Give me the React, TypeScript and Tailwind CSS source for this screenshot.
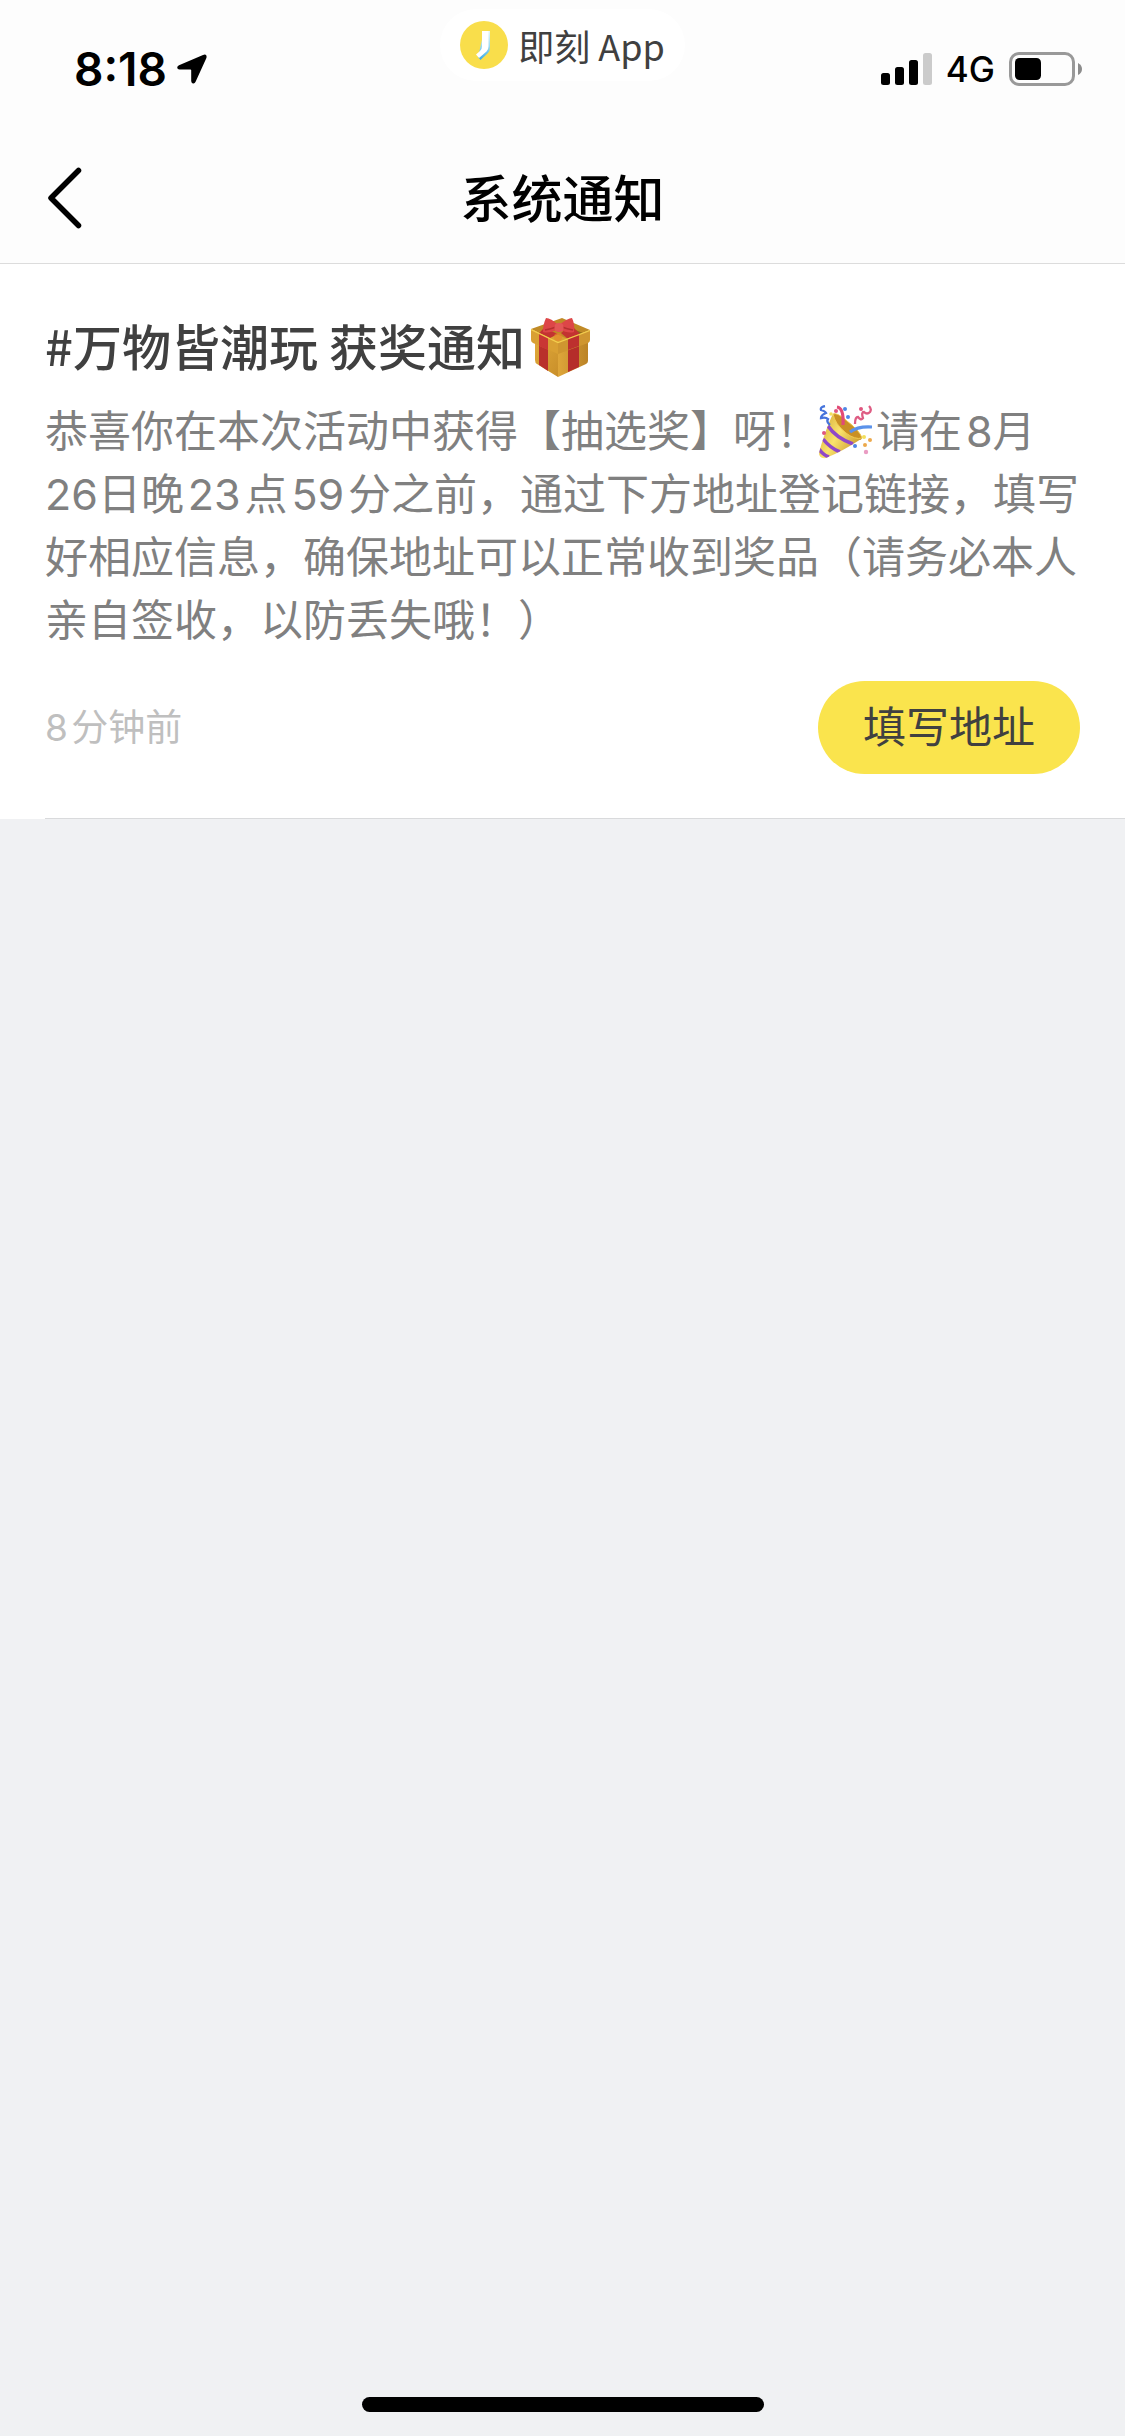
import React from 'react';

const StatusBar: React.FC = () => (
  <div className="grid h-[132px] grid-cols-3 items-center pt-1.5 font-['Inter','Noto_Sans_CJK_SC',sans-serif] text-black">
    <div className="flex items-center gap-2.5 pl-[74px]">
      <span className="text-[46px] font-semibold leading-none">8:18</span>
      <svg className="h-[30px] w-[30px]" viewBox="0 0 30 30" aria-hidden="true">
        <path
          d="M2 11.2 26 .9Q30.4-.5 29.4 4L18.6 27.8Q17.6 30 15.8 29.4Q14.2 29 14.2 27V16.2Q14.2 15.6 13.4 15.6H2.5Q.3 15.3.2 13.4Q.3 12 2 11.2Z"
          fill="currentColor"
        />
      </svg>
    </div>

    <div className="mt-[3px] flex h-[72px] items-center gap-2.5 self-start justify-self-center rounded-full bg-white px-5 font-['Noto_Sans_CJK_SC',sans-serif] text-[36px] leading-none text-[#404040]">
      <svg className="h-12 w-12" viewBox="0 0 48 48" aria-hidden="true">
        <defs>
          <linearGradient id="jike" x1="0" y1="0" x2="0" y2="1">
            <stop offset="0" stopColor="#e8f6f4" />
            <stop offset="0.5" stopColor="#9fdcf0" />
            <stop offset="1" stopColor="#3aa9e8" />
          </linearGradient>
        </defs>
        <circle cx="24" cy="24" r="24" fill="#f9de4b" />
        <path d="M24 10H30V26Q30 30 28 32L20.5 39L18 36Z" fill="url(#jike)" />
        <path d="M22 10H28.5V25.5Q28.5 28.5 26.5 30.5L19 37L16 33.5L20 30Q22 28.2 22 25.5Z" fill="#ffffff" />
      </svg>
      <span>即刻 App</span>
    </div>

    <div className="flex items-center justify-self-end pr-[43px]">
      <svg className="h-8 w-[51px]" viewBox="0 0 51 32" aria-hidden="true">
        <rect x="0" y="20" width="9" height="12" rx="2.5" />
        <rect x="14" y="14" width="9" height="18" rx="2.5" />
        <rect x="28" y="7" width="9" height="25" rx="2.5" />
        <rect x="42" y="0" width="9" height="32" rx="2.5" fill="#cbcbcb" />
      </svg>
      <span className="ml-3.5 mr-3.5 text-[35px] font-medium leading-none">4G</span>
      <svg className="h-[34px] w-[73px]" viewBox="0 0 73 34" aria-hidden="true">
        <rect x="1.5" y="1.5" width="63" height="31" rx="8.5" fill="none" stroke="#999999" strokeWidth="3" />
        <rect x="6" y="6" width="26" height="22" rx="4.5" />
        <path d="M69 11Q73 13 73 17T69 23Z" fill="#8c8c8c" />
      </svg>
    </div>
  </div>
);

const GiftIcon: React.FC = () => (
  <svg className="h-[60px] w-[60px]" viewBox="0 0 60 60" role="img" aria-label="礼物">
    <defs>
      <linearGradient id="giftLeft" x1="0" y1="0" x2="1" y2="1">
        <stop offset="0" stopColor="#e0a93a" />
        <stop offset="1" stopColor="#c98f2a" />
      </linearGradient>
      <linearGradient id="giftRight" x1="0" y1="0" x2="1" y2="0">
        <stop offset="0" stopColor="#dea63a" />
        <stop offset="1" stopColor="#bb8326" />
      </linearGradient>
    </defs>
    <path d="M4 23 27 35V60L6 47Q4 46 4 43Z" fill="url(#giftLeft)" />
    <path d="M27 35 57 23V44Q57 46 55 47L27 60Z" fill="url(#giftRight)" />
    <path d="M8 25 17 30V54L8 48Z" fill="#b9302b" />
    <path d="M37 31 48 27V50L37 55Z" fill="#b52d2a" />
    <path d="M0 12 31 1 59 13 27 26Z" fill="#c08a26" />
    <path d="M8 15 14 12 37 22 27 26Z" fill="#d9a234" />
    <path d="M32 8 52 16 43 20 26 10Z" fill="#8d6a1c" />
    <path d="M8 16 13 11 27 17 17 22Z" fill="#c33331" />
    <path d="M37 22 30 16 40 8 49 17Z" fill="#c33331" />
    <path d="M0 12 27 25V37L2 26Q0 25 0 23Z" fill="#d9a033" />
    <path d="M27 25 59 13V23Q59 25 57 26L27 37Z" fill="#cf9630" />
    <path d="M8 16 17 21V33L8 29Z" fill="#c93734" />
    <path d="M37 22 48 17V29L37 33Z" fill="#bd302e" />
    <path d="M0 12.5 27 25.5 59 13.5" fill="none" stroke="#f3cd4d" strokeWidth="1.3" />
    <circle cx="27" cy="20" r="4" fill="#e8862c" opacity="0.6" />
    <path d="M27 8Q20 1 15 1Q12 7 12 15Q18 17 27 12Z" fill="#dd4647" />
    <path d="M28 8Q37 1 41 1Q44 7 43 15Q37 17 28 12Z" fill="#dd4647" />
    <path d="M14 13Q20 12 25 10M42 13Q36 12 31 10" fill="none" stroke="#b5302f" strokeWidth="1.5" />
    <rect x="23.5" y="6" width="9" height="9" rx="4" fill="#e35656" />
  </svg>
);

const PartyIcon: React.FC = () => (
  <svg className="mr-1 inline-block h-[54px] w-[53px] align-[-12px]" viewBox="0 0 53 54" role="img" aria-label="庆祝">
    <defs>
      <linearGradient id="cone" x1="0" y1="0" x2="1" y2="0.6">
        <stop offset="0" stopColor="#c79422" />
        <stop offset="0.5" stopColor="#fae36d" />
        <stop offset="1" stopColor="#bd861c" />
      </linearGradient>
      <clipPath id="coneShape">
        <path d="M14 9 42 34Q24 46 7 53Q0 54 0 48Q4 32 12 13Z" />
      </clipPath>
    </defs>
    <path d="M14 9Q18 7 28 16Q41 26 43 33Q42 37 34 33Q15 22 14 9Z" fill="#b77d1a" />
    <g clipPath="url(#coneShape)">
      <rect width="53" height="54" fill="url(#cone)" />
      <path d="M9 21Q17 33 34 39M4 34Q11 43 21 47M0 44Q4 50 10 52" fill="none" stroke="#9048c8" strokeWidth="3.6" />
    </g>
    <path d="M14 9Q18 7 28 16Q41 26 43 33Q36 35 27 28Q16 19 14 9Z" fill="#c99024" stroke="#f1cb50" strokeWidth="1" />
    <path d="M18 2Q25 3 24 20" fill="none" stroke="#e24a76" strokeWidth="3.2" />
    <path d="M31 27Q39 21 53 22" fill="none" stroke="#5b92ea" strokeWidth="3.2" />
    <path d="M6 1Q1 2 2 5Q6 6 7 8Q2 10 2 13Q7 12 9 14Q7 17 11 20" fill="none" stroke="#4674dc" strokeWidth="2.3" />
    <path d="M36 19Q36 12 39 12Q42 16 44 13Q42 7 45 7Q48 10 51 7Q53 4 50 1" fill="none" stroke="#de5c83" strokeWidth="2.3" />
    <g fill="#4e86e6">
      <circle cx="26" cy="4" r="2" />
      <circle cx="29" cy="12" r="2" />
      <circle cx="36" cy="41" r="2" />
    </g>
    <g fill="#e0567f">
      <circle cx="42" cy="4" r="2" />
      <circle cx="5" cy="28" r="2" />
      <circle cx="17" cy="6" r="2" />
    </g>
    <g fill="#eca94c">
      <circle cx="51" cy="35" r="2" />
      <circle cx="46" cy="40" r="2" />
    </g>
    <circle cx="47" cy="47" r="2.2" fill="#ea9cc3" />
    <circle cx="45" cy="32" r="2" fill="#f3df5c" />
    <circle cx="12" cy="9" r="1.8" fill="#f3df5c" />
  </svg>
);

const NavBar: React.FC = () => (
  <nav className="grid h-[131px] grid-cols-3 items-center">
    <button type="button" aria-label="返回" className="justify-self-start pl-[46px] text-black">
      <svg className="h-16 w-[38px]" viewBox="0 0 38 64" fill="none" aria-hidden="true">
        <path d="M32.5 4.5 5 32 32.5 59.5" stroke="currentColor" strokeWidth="5.5" strokeLinecap="round" strokeLinejoin="round" />
      </svg>
    </button>
    <h1 className="pt-1 text-center text-[51px] font-medium leading-none text-black">系统通知</h1>
  </nav>
);

const Notice: React.FC = () => (
  <article className="bg-white pl-[45px]">
    <div className="border-b border-[#d9dadc] pb-11 pr-[45px] pt-[45px]">
      <h2 className="flex h-[76px] items-center gap-1.5 font-['Noto_Sans_CJK_SC',sans-serif] text-[49px] font-medium text-[#404040]">
        <span className="pb-1">#万物皆潮玩 获奖通知</span>
        <GiftIcon />
      </h2>
      <p className="mt-[15px] text-[43px] leading-[63px] text-[#808080]">
        恭喜你在本次活动中获得【抽选奖】呀！
        <PartyIcon />
        请在&#8202;8月26日晚&#8202;23&#8202;点&#8202;59&#8202;分之前，通过下方地址登记链接，填写好相应信息，确保地址可以正常收到奖品（请务必本人亲自签收，以防丢失哦！）
      </p>
      <div className="mt-[29px] flex items-center justify-between">
        <time className="text-[37px] text-[#bfbfbf]">8&#8202;分钟前</time>
        <button type="button" className="h-[93px] rounded-full bg-[#fae44d] px-[45px] text-[43px] text-[#404040]">
          填写地址
        </button>
      </div>
    </div>
  </article>
);

export default function App() {
  return (
    <div className="flex min-h-screen flex-col bg-[#f0f1f3] font-['Inter','Noto_Sans_CJK_SC',sans-serif]" lang="zh-CN">
      <header className="border-b border-[#dcdcdc] bg-[#fdfdfd]">
        <StatusBar />
        <NavBar />
      </header>
      <main className="flex-1">
        <Notice />
      </main>
      <div className="mx-auto mb-6 h-[15px] w-[402px] rounded-full bg-black" />
    </div>
  );
}
